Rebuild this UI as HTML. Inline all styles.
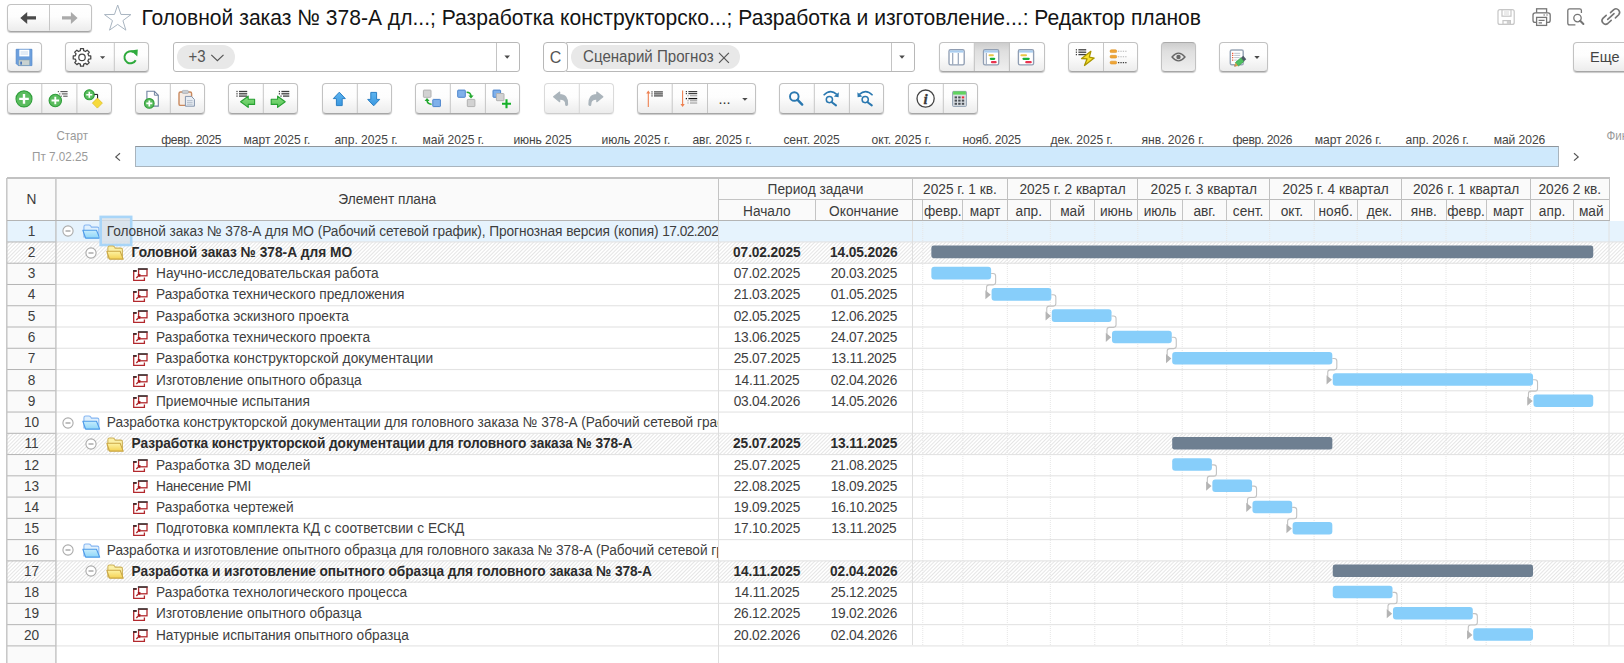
<!DOCTYPE html><html lang="ru"><head><meta charset="utf-8"><title>Редактор планов</title><style>
*{box-sizing:border-box}
html,body{margin:0;padding:0}
body{width:1624px;height:663px;overflow:hidden;position:relative;background:#fff;font-family:"Liberation Sans",sans-serif;color:#3e3e3e;font-size:13.7px}
.a{position:absolute}
.btn{position:absolute;border:1px solid #c2c2c2;border-bottom-color:#a6a6a6;border-radius:4px;background:linear-gradient(#fff 0%,#fdfdfd 45%,#ececec 100%);box-shadow:0 1px 1px rgba(0,0,0,.22)}
.btn i{position:absolute;top:0;bottom:0;width:1px;background:#c9c9c9}
.btn svg{position:absolute}
.pressed{background:linear-gradient(#cdcdcd,#dfdfdf 30%,#efefef);border-top-color:#aaa}
.dis{border-color:#dadada;border-bottom-color:#cdcdcd;box-shadow:0 1px 1px rgba(0,0,0,.08)}
.dis i{background:#dcdcdc}
.inp{position:absolute;border:1px solid #b8b8b8;border-radius:3px;background:#fff}
.tag{position:absolute;background:#e8e8e8;border-radius:12px;color:#555;white-space:nowrap}
.hl{position:absolute;height:1px;background:#e4e4e4}
.vl{position:absolute;width:1px;background:#c4c4c4}
.t{position:absolute;white-space:nowrap;line-height:21.26px;height:21.26px;transform:translateY(-0.3px) scaleY(1.07)}
.sy{display:inline-block;transform:scaleY(1.05)}
.hd{position:absolute;white-space:nowrap;text-align:center;color:#3c3c3c;transform:scaleY(1.05)}
.hatch{position:absolute;background:repeating-linear-gradient(135deg,#fff 0,#fff 0.5px,#e5e5e5 1.5px,#fff 2.5px,#fff 2.65px)}
.bar{position:absolute;height:12.9px;border-radius:3px;background:#87cefa}
.sbar{position:absolute;height:12.9px;border-radius:2.5px;background:#6e7f91}
.ml{position:absolute;top:133px;font-size:12.1px;color:#444;white-space:nowrap;line-height:14px;transform:scaleY(1.05)}
</style></head><body>
<div class="btn" style="left:6.5px;top:4px;width:85px;height:27.5px"></div>

<div class="a" style="left:141.5px;top:5px;font-size:21.08px;line-height:26px;color:#141414;white-space:nowrap;transform:scaleY(1.05);transform-origin:0 19.6px">Головной заказ № 378-А дл...; Разработка конструкторско...; Разработка и изготовление...: Редактор планов</div>

<div class="btn " style="left:6.5px;top:42px;width:35px;height:30px"></div>
<div class="btn " style="left:65px;top:42px;width:83.5px;height:30px"></div>
<div class="inp" style="left:173.4px;top:42px;width:346.6px;height:30px"><i class="a" style="left:321.6px;top:0;bottom:0;width:1px;background:#c4c4c4"></i></div>
<div class="tag" style="left:176.6px;top:45.3px;width:58.4px;height:24px;font-size:15px;line-height:24px;padding-left:12px"><span class="sy">+3</span></div>
<div class="inp" style="left:566px;top:42px;width:348.8px;height:30px;border-radius:0 3px 3px 0"><i class="a" style="left:323.5px;top:0;bottom:0;width:1px;background:#c4c4c4"></i></div>
<div class="btn" style="left:543px;top:42px;width:25px;height:30px;box-shadow:none;border-color:#b8b8b8;background:#fff;font-size:16px;line-height:29px;text-align:center;color:#555"><span class="sy">С</span></div>
<div class="tag" style="left:571px;top:45.3px;width:169px;height:24px;font-size:15.1px;line-height:24px;padding-left:12px"><span class="sy">Сценарий Прогноз</span></div>
<div class="btn " style="left:939px;top:42px;width:105.5px;height:30px"><b class="a" style="left:34.6px;top:0;width:34.8px;height:28px;background:linear-gradient(#cdcdcd,#dfdfdf 30%,#efefef)"></b></div>
<div class="btn " style="left:1068px;top:42px;width:70px;height:30px"></div>
<div class="btn pressed" style="left:1161px;top:42px;width:35px;height:30px"></div>
<div class="btn " style="left:1219px;top:42px;width:48.5px;height:30px"></div>
<div class="btn" style="left:1573px;top:42px;width:60px;height:30px;font-size:14.5px;line-height:28px;padding-left:16px;color:#444"><span class="sy">Еще</span></div>
<div class="btn " style="left:6.5px;top:83px;width:105px;height:31px"><span class="a" style="left:0px;top:0;width:34px;height:28px"></span><span class="a" style="left:35px;top:0;width:34px;height:28px"></span><span class="a" style="left:70px;top:0;width:34px;height:28px"></span></div>
<div class="btn " style="left:135px;top:83px;width:70px;height:31px"><span class="a" style="left:0px;top:0;width:34px;height:28px"></span><span class="a" style="left:35px;top:0;width:34px;height:28px"></span></div>
<div class="btn " style="left:228px;top:83px;width:70px;height:31px"><span class="a" style="left:0px;top:0;width:34px;height:28px"></span><span class="a" style="left:35px;top:0;width:34px;height:28px"></span></div>
<div class="btn " style="left:322px;top:83px;width:70px;height:31px"><span class="a" style="left:0px;top:0;width:34px;height:28px"></span><span class="a" style="left:35px;top:0;width:34px;height:28px"></span></div>
<div class="btn " style="left:415px;top:83px;width:105px;height:31px"><span class="a" style="left:0px;top:0;width:34px;height:28px"></span><span class="a" style="left:35px;top:0;width:34px;height:28px"></span><span class="a" style="left:70px;top:0;width:34px;height:28px"></span></div>
<div class="btn dis" style="left:544px;top:83px;width:70px;height:31px"><span class="a" style="left:0px;top:0;width:34px;height:28px"></span><span class="a" style="left:35px;top:0;width:34px;height:28px"></span></div>
<div class="btn " style="left:637px;top:83px;width:119px;height:31px"><span class="a" style="left:0;top:0;width:34px;height:28px"></span><span class="a" style="left:35px;top:0;width:34px;height:28px"></span><span class="a" style="left:80.5px;top:3.6px;font-size:14.5px;color:#333;line-height:22px">...</span></div>
<div class="btn " style="left:779px;top:83px;width:105px;height:31px"><span class="a" style="left:0px;top:0;width:34px;height:28px"></span><span class="a" style="left:35px;top:0;width:34px;height:28px"></span><span class="a" style="left:70px;top:0;width:34px;height:28px"></span></div>
<div class="btn " style="left:908px;top:83px;width:70px;height:31px"><span class="a" style="left:0px;top:0;width:34px;height:28px"></span><span class="a" style="left:35px;top:0;width:34px;height:28px"></span></div>
<svg class="a" style="left:0;top:0" width="1624" height="120" viewBox="0 0 1624 120"><defs><linearGradient id="gB" x1="0" y1="0" x2="0" y2="1"><stop offset="0" stop-color="#5db4f0"/><stop offset="1" stop-color="#3b98e0"/></linearGradient><linearGradient id="gG" x1="0" y1="0" x2="0" y2="1"><stop offset="0" stop-color="#84da7c"/><stop offset="1" stop-color="#5cc85a"/></linearGradient></defs><rect x="41.30" y="84.00" width="1" height="29.00" fill="#c6c6c6"/><rect x="76.40" y="84.00" width="1" height="29.00" fill="#c6c6c6"/><rect x="169.80" y="84.00" width="1" height="29.00" fill="#c6c6c6"/><rect x="262.80" y="84.00" width="1" height="29.00" fill="#c6c6c6"/><rect x="356.80" y="84.00" width="1" height="29.00" fill="#c6c6c6"/><rect x="449.80" y="84.00" width="1" height="29.00" fill="#c6c6c6"/><rect x="484.90" y="84.00" width="1" height="29.00" fill="#c6c6c6"/><rect x="578.80" y="84.00" width="1" height="29.00" fill="#d8d8d8"/><rect x="671.70" y="84.00" width="1" height="29.00" fill="#c6c6c6"/><rect x="707.00" y="84.00" width="1" height="29.00" fill="#c6c6c6"/><rect x="813.80" y="84.00" width="1" height="29.00" fill="#c6c6c6"/><rect x="848.90" y="84.00" width="1" height="29.00" fill="#c6c6c6"/><rect x="942.80" y="84.00" width="1" height="29.00" fill="#c6c6c6"/><rect x="49.00" y="5.00" width="1" height="25.50" fill="#c6c6c6"/><rect x="113.80" y="43.00" width="1" height="28.00" fill="#c6c6c6"/><rect x="973.80" y="43.00" width="1" height="28.00" fill="#bdbdbd"/><rect x="1008.90" y="43.00" width="1" height="28.00" fill="#bdbdbd"/><rect x="1103.00" y="43.00" width="1" height="28.00" fill="#c6c6c6"/><path d="M20.3 17.9 L27.2 12 V16.3 H36 V19.6 H27.2 V23.9 Z" fill="#4a4a4a"/><path d="M77.6 17.9 L70.9 12 V16.3 H62 V19.6 H70.9 V23.9 Z" fill="#aaaaaa"/><polygon points="117.70,5.00 120.93,14.45 130.92,14.60 122.93,20.60 125.87,30.15 117.70,24.40 109.53,30.15 112.47,20.60 104.48,14.60 114.47,14.45" fill="#fff" stroke="#a9b5c1" stroke-width="1"/><g fill="none" stroke="#c6c6c6" stroke-width="1.2"><rect x="1498" y="9.6" width="16.2" height="14.8" rx="2"/><rect x="1502" y="9.6" width="9" height="6.6"/><rect x="1503" y="20.6" width="7.4" height="3.8"/></g><path d="M1504 12 H1509 M1504 14 H1509" stroke="#d2d2d2" stroke-width="0.9"/><rect x="1506.8" y="21" width="3.2" height="3.2" fill="#d0d0d0"/><g fill="#fff" stroke="#757575" stroke-width="1.3"><rect x="1536.6" y="8.8" width="10" height="4.4"/><rect x="1533" y="12.8" width="17.2" height="9.6" rx="2.2"/><rect x="1536.6" y="17.4" width="10" height="8"/></g><path d="M1538.6 20.4 H1544.6 M1538.6 22.8 H1542" stroke="#757575" stroke-width="1.2"/><path d="M1543.4 15 H1545 M1546.2 15 H1547.8" stroke="#757575" stroke-width="1.1"/><path d="M1581.4 13 V10.6 Q1581.4 8.8 1579.6 8.8 H1569.6 Q1567.8 8.8 1567.8 10.6 V23 Q1567.8 24.9 1569.6 24.9 H1575.4" fill="none" stroke="#757575" stroke-width="1.3"/><circle cx="1577.5" cy="18.1" r="3.7" fill="#fff" stroke="#757575" stroke-width="1.3"/><path d="M1580.2 20.8 L1583.4 24" stroke="#757575" stroke-width="2" stroke-linecap="round"/><g fill="none" stroke="#757575" stroke-width="1.6" stroke-linecap="round"><path d="M1610.5 12.6 L1613.8 9.6 A3.6 3.6 0 0 1 1618.7 14.8 L1615.4 17.9"/><path d="M1611.2 20.4 L1607.8 23.5 A3.6 3.6 0 0 1 1602.9 18.3 L1606.2 15.3"/><path d="M1607.7 19.4 L1614 13.6"/></g><path d="M16.2 49.3 H31.9 V65.6 H18.2 L16.2 63.6 Z" fill="#6c9fdd" stroke="#4f86cc" stroke-width="0.8"/><rect x="19.3" y="49.7" width="10" height="6.7" fill="#fff"/><path d="M20.6 52 H28 M20.6 54 H28" stroke="#b9cfe8" stroke-width="0.8"/><rect x="18.9" y="60" width="10.6" height="5.2" fill="#c9d2d1" stroke="#8fa5a8" stroke-width="0.5"/><rect x="20.4" y="61.6" width="1.4" height="3" fill="#2d62b5"/><path d="M88.70 55.76 L90.77 55.89 L90.77 58.91 L88.70 59.04 L87.90 60.98 L89.27 62.54 L87.14 64.67 L85.58 63.30 L83.64 64.10 L83.51 66.17 L80.49 66.17 L80.36 64.10 L78.42 63.30 L76.86 64.67 L74.73 62.54 L76.10 60.98 L75.30 59.04 L73.23 58.91 L73.23 55.89 L75.30 55.76 L76.10 53.82 L74.73 52.26 L76.86 50.13 L78.42 51.50 L80.36 50.70 L80.49 48.63 L83.51 48.63 L83.64 50.70 L85.58 51.50 L87.14 50.13 L89.27 52.26 L87.90 53.82 Z" fill="#fff" stroke="#444" stroke-width="1.25" stroke-linejoin="round"/><circle cx="82.0" cy="57.4" r="3.2" fill="#fff" stroke="#444" stroke-width="1.25"/><path d="M100.00 56.20 H105.20 L102.60 59.00 Z" fill="#4a4a4a"/><path d="M135.7 60.2 A6 6 0 1 1 133.6 52.2" fill="none" stroke="#2eaa3c" stroke-width="2"/><path d="M130.8 50.6 L137.8 49.6 L137.3 56.6 Z" fill="#2eaa3c"/><path d="M504.40 55.50 H510.00 L507.20 58.70 Z" fill="#4a4a4a"/><path d="M899.20 55.50 H904.80 L902.00 58.70 Z" fill="#4a4a4a"/><path d="M211.3 54.9 L217.4 60.6 L223.5 54.9" fill="none" stroke="#555" stroke-width="1.2"/><path d="M719 52.9 L728.9 62.8 M728.9 52.9 L719 62.8" fill="none" stroke="#555" stroke-width="1.2"/><rect x="949.0" y="49.7" width="15.2" height="15.2" rx="1.6" fill="#fff" stroke="#909eb3" stroke-width="1.35"/><rect x="949.6999999999999" y="50.4" width="13.8" height="2.2" fill="#a9cdf0"/><path d="M952.6999999999999 53.1 V64.5 M958.3 53.1 V64.5" stroke="#97a5ba" stroke-width="1.2"/><rect x="983.5" y="49.7" width="15.2" height="15.2" rx="1.6" fill="#fff" stroke="#909eb3" stroke-width="1.35"/><rect x="984.1999999999999" y="50.4" width="13.8" height="2.2" fill="#a9cdf0"/><path d="M986.3 53.1 V64.5" stroke="#97a5ba" stroke-width="1.1"/><rect x="988.5" y="54.300000000000004" width="5.4" height="2" rx="1" fill="#e8c548"/><rect x="989.6999999999999" y="57.7" width="5.6" height="2.2" rx="1.1" fill="#17b03c"/><rect x="990.9" y="61.1" width="5.8" height="2.2" rx="1.1" fill="#e8334f"/><rect x="1018.4" y="49.7" width="15.2" height="15.2" rx="1.6" fill="#fff" stroke="#909eb3" stroke-width="1.35"/><rect x="1019.0999999999999" y="50.4" width="13.8" height="2.2" fill="#a9cdf0"/><rect x="1020.4" y="54.300000000000004" width="6.6" height="2" rx="1" fill="#e8c548"/><rect x="1022.4" y="57.7" width="7.4" height="2.2" rx="1.1" fill="#17b03c"/><rect x="1025.2" y="61.1" width="6.6" height="2.2" rx="1.1" fill="#e8334f"/><rect x="1075.80" y="49.15" width="1.2" height="1.3" fill="#3f3f3f"/><rect x="1078.40" y="49.15" width="7.80" height="1.3" fill="#3f3f3f"/><rect x="1075.80" y="51.55" width="1.2" height="1.3" fill="#3f3f3f"/><rect x="1078.40" y="51.55" width="7.80" height="1.3" fill="#3f3f3f"/><rect x="1075.80" y="53.95" width="1.2" height="1.3" fill="#3f3f3f"/><rect x="1078.40" y="53.95" width="7.80" height="1.3" fill="#3f3f3f"/><path d="M1090.85 51.3 L1081.6 58.5 L1087 58.95 L1084.5 65.5 L1094.2 58.05 L1089.3 57.15 Z" fill="#f8e12d" stroke="#a99500" stroke-width="1.3" stroke-linejoin="round"/><rect x="1110.1" y="49.800000000000004" width="6.6" height="2.8" rx="1.2" fill="#f0a536" stroke="#dc9328" stroke-width="0.6"/><path d="M1118 51.2 H1127" stroke="#b4b4b4" stroke-width="1.1" stroke-dasharray="1.3 1.1"/><rect x="1110.1" y="55.300000000000004" width="6.6" height="2.8" rx="1.2" fill="#f0a536" stroke="#dc9328" stroke-width="0.6"/><path d="M1118 56.7 H1127" stroke="#b4b4b4" stroke-width="1.1" stroke-dasharray="1.3 1.1"/><rect x="1110.1" y="61.2" width="6.6" height="2.8" rx="1.2" fill="#f0a536" stroke="#dc9328" stroke-width="0.6"/><path d="M1118 62.6 H1127" stroke="#3c3c3c" stroke-width="1.1" stroke-dasharray="1.3 1.1"/><path d="M1172 57 Q1178.5 49.4 1185 57 Q1178.5 64.6 1172 57 Z" fill="none" stroke="#666" stroke-width="1.3"/><circle cx="1178.5" cy="57" r="2.2" fill="#666"/><rect x="1230.3" y="49.9" width="12.9" height="14.9" rx="1.5" fill="#fff" stroke="#9aa8b8" stroke-width="1.5"/><path d="M1234.2 53.3 H1240.2 M1234.2 55.4 H1240.2 M1234.2 57.6 H1239.6 M1234.2 60.1 H1237.4" stroke="#b4bcc6" stroke-width="0.9"/><path d="M1232.1 53.3 h1.2 M1232.1 55.4 h1.2 M1232.1 57.6 h1.2 M1232.1 60.1 h1.2" stroke="#e8502a" stroke-width="1.2"/><path d="M1238.33 66.08 L1235.35 62.58 L1240.99 57.79 L1243.97 61.29 Z" fill="#4fc060" stroke="#2e9b40" stroke-width="0.7" stroke-linejoin="round"/><path d="M1240.99 57.79 L1243.27 55.85 L1246.25 59.35 L1243.97 61.29 Z" fill="#4e5a66"/><path d="M1234.4 66.4 L1238.33 66.08 L1235.35 62.58 Z" fill="#d9a050"/><path d="M1234.4 66.4 L1235.8 66.3 L1234.75 65.05 Z" fill="#6b5030"/><path d="M1254.30 56.00 H1259.70 L1257.00 59.00 Z" fill="#4a4a4a"/><circle cx="24" cy="98.9" r="8" fill="#5bbd5f" stroke="#2f9e3a" stroke-width="1.1"/><path d="M19.2 98.9 H28.8 M24 94.10000000000001 V103.7" stroke="#fff" stroke-width="2.4" fill="none"/><circle cx="55.3" cy="100.5" r="6.2" fill="#5bbd5f" stroke="#2f9e3a" stroke-width="1.1"/><path d="M51.5 100.5 H59.099999999999994 M55.3 96.7 V104.3" stroke="#fff" stroke-width="1.9" fill="none"/><rect x="57.80" y="91.05" width="1.2" height="1.1" fill="#555"/><rect x="60.40" y="91.05" width="7.20" height="1.1" fill="#555"/><rect x="59.20" y="93.35" width="1.2" height="1.1" fill="#555"/><rect x="61.80" y="93.35" width="5.80" height="1.1" fill="#555"/><rect x="60.60" y="95.65" width="1.2" height="1.1" fill="#555"/><rect x="63.20" y="95.65" width="4.40" height="1.1" fill="#555"/><circle cx="89.3" cy="94.8" r="5" fill="#5bbd5f" stroke="#2f9e3a" stroke-width="1.1"/><path d="M86.3 94.8 H92.3 M89.3 91.8 V97.8" stroke="#fff" stroke-width="1.6" fill="none"/><path d="M94.4 94.4 H97.6 V99" fill="none" stroke="#111" stroke-width="1"/><path d="M97.4 98.1 L102.4 103.1 L97.4 108.1 L92.4 103.1 Z" fill="#f6da3c" stroke="#d9b91c" stroke-width="0.7"/><path d="M146.9 91.3 H154.4 L158.3 95.2 V106.1 H146.9 Z" fill="#fff" stroke="#6f83a0" stroke-width="1.1"/><path d="M154.4 91.3 V95.2 H158.3" fill="none" stroke="#6f83a0" stroke-width="1"/><circle cx="149.3" cy="103.4" r="4.8" fill="#5bbd5f" stroke="#2f9e3a" stroke-width="1.1"/><path d="M146.3 103.4 H152.3 M149.3 100.4 V106.4" stroke="#fff" stroke-width="1.7" fill="none"/><rect x="179" y="92" width="12.6" height="13.4" rx="1.5" fill="#f6ede6" stroke="#c9895e" stroke-width="1.4"/><rect x="182.2" y="90.4" width="6.2" height="3" rx="1" fill="#c9cdd2" stroke="#9aa0a8" stroke-width="0.6"/><path d="M185.4 96.4 H191.4 L194.4 99.4 V106.2 H185.4 Z" fill="#e9eef4" stroke="#8394ad" stroke-width="1"/><path d="M187 100.6 H192.6 M187 102.4 H192.6 M187 104.2 H192.6" stroke="#aab5c4" stroke-width="0.8"/><rect x="236.40" y="90.85" width="1.2" height="1.3" fill="#3f3f3f"/><rect x="239.00" y="90.85" width="8.20" height="1.3" fill="#3f3f3f"/><rect x="236.40" y="93.15" width="1.2" height="1.3" fill="#3f3f3f"/><rect x="239.00" y="93.15" width="8.20" height="1.3" fill="#3f3f3f"/><rect x="236.40" y="95.45" width="1.2" height="1.3" fill="#3f3f3f"/><rect x="239.00" y="95.45" width="8.20" height="1.3" fill="#3f3f3f"/><path d="M240.6 101.8 L248.2 96.2 V99.2 H254.6 V104.4 H248.2 V107.4 Z" fill="url(#gG)" stroke="#27a032" stroke-width="1.1" stroke-linejoin="round"/><rect x="278.80" y="90.85" width="1.2" height="1.3" fill="#3f3f3f"/><rect x="281.40" y="90.85" width="7.90" height="1.3" fill="#3f3f3f"/><rect x="278.80" y="93.15" width="1.2" height="1.3" fill="#3f3f3f"/><rect x="281.40" y="93.15" width="7.90" height="1.3" fill="#3f3f3f"/><rect x="280.40" y="95.45" width="1.2" height="1.3" fill="#3f3f3f"/><rect x="283.00" y="95.45" width="6.30" height="1.3" fill="#3f3f3f"/><path d="M285.2 101.8 L277.6 96.2 V99.2 H271.2 V104.4 H277.6 V107.4 Z" fill="url(#gG)" stroke="#27a032" stroke-width="1.1" stroke-linejoin="round"/><path d="M339.3 92.2 L345.3 98.6 H342.2 V105.6 H336.4 V98.6 H333.3 Z" fill="url(#gB)" stroke="#2a7fc4" stroke-width="1" stroke-linejoin="round"/><path d="M373.7 105.8 L379.7 99.4 H376.6 V92.4 H370.8 V99.4 H367.7 Z" fill="url(#gB)" stroke="#2a7fc4" stroke-width="1" stroke-linejoin="round"/><rect x="423.4" y="90.1" width="7.6" height="7.2" rx="0.6" fill="#d2d2d2" stroke="#b2b2b2" stroke-width="1"/><rect x="432.8" y="99.4" width="7.6" height="7.2" rx="0.6" fill="#7fb0ea" stroke="#4c84cc" stroke-width="1"/><path d="M431.6 104.2 Q427.2 104 427 100.2" fill="none" stroke="#22a82e" stroke-width="1.6"/><path d="M424.6 101 L427 98 L429.6 101 Z" fill="#22a82e"/><rect x="457.7" y="90.1" width="7.6" height="7.2" rx="0.6" fill="#7fb0ea" stroke="#4c84cc" stroke-width="1"/><rect x="467.3" y="99.4" width="7.6" height="7.2" rx="0.6" fill="#d2d2d2" stroke="#b2b2b2" stroke-width="1"/><path d="M466.6 92.2 Q470.8 92.4 471 96" fill="none" stroke="#22a82e" stroke-width="1.6"/><path d="M468.4 95.4 L471 98.4 L473.6 95.4 Z" fill="#22a82e"/><rect x="493" y="90.1" width="7.6" height="7.2" rx="0.6" fill="#7fb0ea" stroke="#4c84cc" stroke-width="1"/><rect x="496.4" y="93.5" width="7.6" height="7.2" rx="0.6" fill="#d2d2d2" stroke="#b2b2b2" stroke-width="1"/><path d="M502 103.7 H511 M506.5 99.2 V108.2" stroke="#16b02a" stroke-width="2.1"/><path d="M553.6 96.8 L559.7 92 V94.6 Q568.1 94.7 567.6 104.4 Q567.5 105.4 566.6 105.4 Q565.7 105.4 565.7 104.4 Q565.9 99.1 559.7 98.9 V101.7 Z" fill="#aab4bb" stroke="#aab4bb" stroke-width="1.1" stroke-linejoin="round"/><path d="M602.9 96.8 L596.8 92 V94.6 Q588.4 94.7 588.9 104.4 Q589 105.4 589.9 105.4 Q590.8 105.4 590.8 104.4 Q590.6 99.1 596.8 98.9 V101.7 Z" fill="#aab4bb" stroke="#aab4bb" stroke-width="1.1" stroke-linejoin="round"/><path d="M648.3 92 V106.9" stroke="#ee8050" stroke-width="1.1"/><path d="M646.2 93.4 L648.3 90.4 L650.4 93.4 Z" fill="#ee8050"/><rect x="651.40" y="91.30" width="1.2" height="1.2" fill="#3f3f3f"/><rect x="654.00" y="91.30" width="8.90" height="1.2" fill="#3f3f3f"/><rect x="651.40" y="93.30" width="1.2" height="1.2" fill="#3f3f3f"/><rect x="654.00" y="93.30" width="8.90" height="1.2" fill="#3f3f3f"/><rect x="651.40" y="95.30" width="1.2" height="1.2" fill="#3f3f3f"/><rect x="654.00" y="95.30" width="8.90" height="1.2" fill="#3f3f3f"/><path d="M682.6 90.6 V105.4" stroke="#ee8050" stroke-width="1.1"/><path d="M680.5 104 L682.6 107 L684.7 104 Z" fill="#ee8050"/><rect x="685.80" y="91.00" width="1.2" height="1.2" fill="#3f3f3f"/><rect x="688.40" y="91.00" width="8.80" height="1.2" fill="#3f3f3f"/><rect x="685.80" y="93.00" width="1.2" height="1.2" fill="#3f3f3f"/><rect x="688.40" y="93.00" width="8.80" height="1.2" fill="#3f3f3f"/><rect x="687.40" y="95.35" width="1.2" height="0.9" fill="#888"/><rect x="690.00" y="95.35" width="7.20" height="0.9" fill="#888"/><rect x="685.80" y="97.95" width="1.2" height="1.3" fill="#111"/><rect x="688.40" y="97.95" width="8.80" height="1.3" fill="#111"/><rect x="687.40" y="100.35" width="1.2" height="0.9" fill="#888"/><rect x="690.00" y="100.35" width="7.20" height="0.9" fill="#888"/><rect x="687.40" y="102.55" width="1.2" height="0.9" fill="#888"/><rect x="690.00" y="102.55" width="7.20" height="0.9" fill="#888"/><path d="M742.20 97.90 H747.60 L744.90 100.70 Z" fill="#4a4a4a"/><circle cx="794.3" cy="96.5" r="4.3" fill="none" stroke="#2a78b0" stroke-width="1.9"/><path d="M797.6 99.9 L802.2 104.6" stroke="#2a78b0" stroke-width="2.4" stroke-linecap="round"/><circle cx="829.4" cy="99.6" r="3.1" fill="none" stroke="#2a78b0" stroke-width="1.5"/><path d="M831.8 102.2 L836 105.4" stroke="#2a78b0" stroke-width="2" stroke-linecap="round"/><path d="M823.6 95.2 Q830.4 88.4 836.8 94.4" fill="none" stroke="#2a78b0" stroke-width="1.5"/><path d="M838.8 92.2 L838.6 97.2 L833.8 96.4 Z" fill="#2a78b0"/><circle cx="865.2" cy="99.6" r="3.1" fill="none" stroke="#2a78b0" stroke-width="1.5"/><path d="M867.6 102.2 L871.8 105.4" stroke="#2a78b0" stroke-width="2" stroke-linecap="round"/><path d="M872.6 95.2 Q865.8 88.4 859.4 94.4" fill="none" stroke="#2a78b0" stroke-width="1.5"/><path d="M857.4 92.2 L857.6 97.2 L862.4 96.4 Z" fill="#2a78b0"/><circle cx="925.6" cy="98.6" r="8.6" fill="#fff" stroke="#444" stroke-width="1.3"/><text x="925.6" y="103.7" text-anchor="middle" font-family="Liberation Serif,serif" font-style="italic" font-weight="bold" font-size="15" fill="#3a3a3a" stroke="#3a3a3a" stroke-width="0.35">i</text><rect x="952.6" y="91.4" width="13.8" height="15" rx="0.8" fill="#d9dee3" stroke="#8797aa" stroke-width="0.9"/><rect x="953.1" y="91.4" width="12.8" height="3.2" fill="#5fd35f"/><rect x="954.6" y="96.4" width="2.4" height="2" fill="#4a4f55"/><rect x="958.2" y="96.4" width="2.4" height="2" fill="#4a4f55"/><rect x="961.8" y="96.4" width="2.4" height="2" fill="#f0283c"/><rect x="954.6" y="99.6" width="2.4" height="2" fill="#4a4f55"/><rect x="958.2" y="99.6" width="2.4" height="2" fill="#4a4f55"/><rect x="961.8" y="99.6" width="2.4" height="2" fill="#4a4f55"/><rect x="954.6" y="102.8" width="2.4" height="2" fill="#4a4f55"/><rect x="958.2" y="102.8" width="2.4" height="2" fill="#4a4f55"/><rect x="961.8" y="102.8" width="2.4" height="2" fill="#4a4f55"/></svg>
<div class="a" style="left:30px;top:129px;width:58px;text-align:right;font-size:11.6px;color:#9a9a9a;line-height:14px;transform:scaleY(1.05)">Старт</div>
<div class="a" style="left:20px;top:149.8px;width:68px;text-align:right;font-size:11.7px;color:#9a9a9a;line-height:14px;white-space:nowrap;transform:scaleY(1.05)">Пт 7.02.25</div>
<svg class="a" style="left:113px;top:152px" width="10" height="10" viewBox="0 0 10 10"><path d="M7 1.2 L2.8 4.9 L7 8.6" fill="none" stroke="#555" stroke-width="1.2"/></svg>
<svg class="a" style="left:1570.5px;top:152px" width="10" height="10" viewBox="0 0 10 10"><path d="M3 1.2 L7.2 4.9 L3 8.6" fill="none" stroke="#555" stroke-width="1.2"/></svg>
<div class="a" style="left:1606.5px;top:129px;font-size:11.6px;color:#9a9a9a;line-height:14px;white-space:nowrap;transform:scaleY(1.05)">Финиш</div>
<div class="a" style="left:135px;top:146px;width:1424px;height:21px;background:#cfe9fc;border:1px solid #a9b4bd;border-top-color:#8e959b"></div>
<div class="ml" style="left:161.2px;letter-spacing:-0.35px">февр. 2025</div>
<div class="ml" style="left:243.4px;letter-spacing:0px">март 2025 г.</div>
<div class="ml" style="left:334.4px;letter-spacing:0px">апр. 2025 г.</div>
<div class="ml" style="left:422.4px;letter-spacing:0px">май 2025 г.</div>
<div class="ml" style="left:513.4px;letter-spacing:-0.1px">июнь 2025</div>
<div class="ml" style="left:601.5px;letter-spacing:0px">июль 2025 г.</div>
<div class="ml" style="left:692.4px;letter-spacing:0px">авг. 2025 г.</div>
<div class="ml" style="left:783.4px;letter-spacing:-0.1px">сент. 2025</div>
<div class="ml" style="left:871.5px;letter-spacing:0px">окт. 2025 г.</div>
<div class="ml" style="left:962.5px;letter-spacing:-0.22px">нояб. 2025</div>
<div class="ml" style="left:1050.5px;letter-spacing:0px">дек. 2025 г.</div>
<div class="ml" style="left:1141.5px;letter-spacing:0px">янв. 2026 г.</div>
<div class="ml" style="left:1232.5px;letter-spacing:-0.38px">февр. 2026</div>
<div class="ml" style="left:1314.7px;letter-spacing:0px">март 2026 г.</div>
<div class="ml" style="left:1405.6px;letter-spacing:0px">апр. 2026 г.</div>
<div class="ml" style="left:1493.7px;letter-spacing:-0.06px">май 2026</div>
<div class="a" style="left:7px;top:178px;width:1602px;height:42.25px;background:#fafafa"></div>
<div class="a" style="left:7px;top:220.25px;width:49px;height:442.75px;background:#fafafa"></div>
<div class="a" style="left:7px;top:220.7px;width:1617px;height:21.26px;background:#e6f3fd"></div>
<div class="hatch" style="left:7px;top:242.30999999999997px;width:1617px;height:21.76px"></div>
<div class="hatch" style="left:7px;top:433.65000000000003px;width:1617px;height:21.76px"></div>
<div class="hatch" style="left:7px;top:561.21px;width:1617px;height:21.76px"></div>
<svg class="a" style="left:0;top:220.25px" width="1624" height="444"><line x1="922.75" y1="0" x2="922.75" y2="425.2" stroke="#e6e6e6" stroke-width="1" stroke-dasharray="1 1"/><line x1="962.89" y1="0" x2="962.89" y2="425.2" stroke="#e6e6e6" stroke-width="1" stroke-dasharray="1 1"/><line x1="1007.33" y1="0" x2="1007.33" y2="425.2" stroke="#e6e6e6" stroke-width="1" stroke-dasharray="1 1"/><line x1="1050.34" y1="0" x2="1050.34" y2="425.2" stroke="#e6e6e6" stroke-width="1" stroke-dasharray="1 1"/><line x1="1094.78" y1="0" x2="1094.78" y2="425.2" stroke="#e6e6e6" stroke-width="1" stroke-dasharray="1 1"/><line x1="1137.79" y1="0" x2="1137.79" y2="425.2" stroke="#e6e6e6" stroke-width="1" stroke-dasharray="1 1"/><line x1="1182.23" y1="0" x2="1182.23" y2="425.2" stroke="#e6e6e6" stroke-width="1" stroke-dasharray="1 1"/><line x1="1226.67" y1="0" x2="1226.67" y2="425.2" stroke="#e6e6e6" stroke-width="1" stroke-dasharray="1 1"/><line x1="1269.68" y1="0" x2="1269.68" y2="425.2" stroke="#e6e6e6" stroke-width="1" stroke-dasharray="1 1"/><line x1="1314.12" y1="0" x2="1314.12" y2="425.2" stroke="#e6e6e6" stroke-width="1" stroke-dasharray="1 1"/><line x1="1357.13" y1="0" x2="1357.13" y2="425.2" stroke="#e6e6e6" stroke-width="1" stroke-dasharray="1 1"/><line x1="1401.57" y1="0" x2="1401.57" y2="425.2" stroke="#e6e6e6" stroke-width="1" stroke-dasharray="1 1"/><line x1="1446.01" y1="0" x2="1446.01" y2="425.2" stroke="#e6e6e6" stroke-width="1" stroke-dasharray="1 1"/><line x1="1486.15" y1="0" x2="1486.15" y2="425.2" stroke="#e6e6e6" stroke-width="1" stroke-dasharray="1 1"/><line x1="1530.60" y1="0" x2="1530.60" y2="425.2" stroke="#e6e6e6" stroke-width="1" stroke-dasharray="1 1"/><line x1="1573.60" y1="0" x2="1573.60" y2="425.2" stroke="#e6e6e6" stroke-width="1" stroke-dasharray="1 1"/><line x1="1609" y1="0" x2="1609" y2="425.2" stroke="#e0e0e0" stroke-width="1"/></svg>
<svg class="a" style="left:0;top:0" width="1624" height="663"><rect x="56" y="241.41" width="1568" height="1.1" fill="#e3e3e3"/><rect x="7" y="241.46" width="49" height="1" fill="#b4b4b4"/><rect x="56" y="262.67" width="1568" height="1.1" fill="#e3e3e3"/><rect x="7" y="262.72" width="49" height="1" fill="#b4b4b4"/><rect x="56" y="283.93" width="1568" height="1.1" fill="#e3e3e3"/><rect x="7" y="283.98" width="49" height="1" fill="#b4b4b4"/><rect x="56" y="305.19" width="1568" height="1.1" fill="#e3e3e3"/><rect x="7" y="305.24" width="49" height="1" fill="#b4b4b4"/><rect x="56" y="326.45" width="1568" height="1.1" fill="#e3e3e3"/><rect x="7" y="326.50" width="49" height="1" fill="#b4b4b4"/><rect x="56" y="347.71" width="1568" height="1.1" fill="#e3e3e3"/><rect x="7" y="347.76" width="49" height="1" fill="#b4b4b4"/><rect x="56" y="368.97" width="1568" height="1.1" fill="#e3e3e3"/><rect x="7" y="369.02" width="49" height="1" fill="#b4b4b4"/><rect x="56" y="390.23" width="1568" height="1.1" fill="#e3e3e3"/><rect x="7" y="390.28" width="49" height="1" fill="#b4b4b4"/><rect x="56" y="411.49" width="1568" height="1.1" fill="#e3e3e3"/><rect x="7" y="411.54" width="49" height="1" fill="#b4b4b4"/><rect x="56" y="432.75" width="1568" height="1.1" fill="#e3e3e3"/><rect x="7" y="432.80" width="49" height="1" fill="#b4b4b4"/><rect x="56" y="454.01" width="1568" height="1.1" fill="#e3e3e3"/><rect x="7" y="454.06" width="49" height="1" fill="#b4b4b4"/><rect x="56" y="475.27" width="1568" height="1.1" fill="#e3e3e3"/><rect x="7" y="475.32" width="49" height="1" fill="#b4b4b4"/><rect x="56" y="496.53" width="1568" height="1.1" fill="#e3e3e3"/><rect x="7" y="496.58" width="49" height="1" fill="#b4b4b4"/><rect x="56" y="517.79" width="1568" height="1.1" fill="#e3e3e3"/><rect x="7" y="517.84" width="49" height="1" fill="#b4b4b4"/><rect x="56" y="539.05" width="1568" height="1.1" fill="#e3e3e3"/><rect x="7" y="539.10" width="49" height="1" fill="#b4b4b4"/><rect x="56" y="560.31" width="1568" height="1.1" fill="#e3e3e3"/><rect x="7" y="560.36" width="49" height="1" fill="#b4b4b4"/><rect x="56" y="581.57" width="1568" height="1.1" fill="#e3e3e3"/><rect x="7" y="581.62" width="49" height="1" fill="#b4b4b4"/><rect x="56" y="602.83" width="1568" height="1.1" fill="#e3e3e3"/><rect x="7" y="602.88" width="49" height="1" fill="#b4b4b4"/><rect x="56" y="624.09" width="1568" height="1.1" fill="#e3e3e3"/><rect x="7" y="624.14" width="49" height="1" fill="#b4b4b4"/><rect x="56" y="645.35" width="1568" height="1.1" fill="#e3e3e3"/><rect x="7" y="645.40" width="49" height="1" fill="#b4b4b4"/></svg>
<svg class="a" style="left:0;top:0" width="60" height="663"><rect x="6.1" y="178" width="1.4" height="485" fill="#c2c2c2"/><rect x="55.2" y="178" width="1.4" height="485" fill="#c2c2c2"/></svg>
<div class="vl" style="left:718.0px;top:178px;height:42.25px"></div>
<div class="vl" style="left:718.0px;top:220.25px;height:442.75px;background:#dedede"></div>
<div class="vl" style="left:912.0px;top:178px;height:42.25px"></div>
<div class="vl" style="left:912.0px;top:220.25px;height:425.20000000000005px;background:#dedede"></div>
<div class="vl" style="left:814.75px;top:199.6px;height:20.650000000000006px"></div>
<div class="a" style="left:6.5px;top:177.3px;width:1603px;height:1.6px;background:#c2c2c2"></div>
<div class="a" style="left:7px;top:219.65px;width:1602.5px;height:1.2px;background:#b4b4b4"></div>
<div class="a" style="left:718.5px;top:199.1px;width:890.5px;height:1px;background:#c4c4c4"></div>
<div class="a" style="left:912.5px;top:198.6px;width:696.5px;height:1.6px;background:#bcbcbc"></div>
<div class="vl" style="left:1608.5px;top:178px;height:42.25px"></div>
<div class="hd" style="left:7.00px;top:179.20px;width:49.00px;height:42.25px;line-height:42.25px">N</div>
<div class="hd" style="left:56.00px;top:179.20px;width:662.50px;height:42.25px;line-height:42.25px">Элемент плана</div>
<div class="hd" style="left:718.50px;top:178.80px;width:194.00px;height:21.60px;line-height:21.60px">Период задачи</div>
<div class="hd" style="left:718.50px;top:201.60px;width:96.75px;height:20.65px;line-height:20.65px">Начало</div>
<div class="hd" style="left:815.25px;top:201.60px;width:97.25px;height:20.65px;line-height:20.65px">Окончание</div>
<div class="hd" style="left:912.50px;top:178.80px;width:94.83px;height:21.60px;line-height:21.60px">2025 г. 1 кв.</div>
<div class="hd" style="left:1007.33px;top:178.80px;width:130.46px;height:21.60px;line-height:21.60px">2025 г. 2 квартал</div>
<div class="vl" style="left:1006.63px;top:178px;height:42.25px;width:1.4px;background:#c0c0c0"></div>
<div class="hd" style="left:1137.79px;top:178.80px;width:131.89px;height:21.60px;line-height:21.60px">2025 г. 3 квартал</div>
<div class="vl" style="left:1137.09px;top:178px;height:42.25px;width:1.4px;background:#c0c0c0"></div>
<div class="hd" style="left:1269.68px;top:178.80px;width:131.89px;height:21.60px;line-height:21.60px">2025 г. 4 квартал</div>
<div class="vl" style="left:1268.98px;top:178px;height:42.25px;width:1.4px;background:#c0c0c0"></div>
<div class="hd" style="left:1401.57px;top:178.80px;width:129.02px;height:21.60px;line-height:21.60px">2026 г. 1 квартал</div>
<div class="vl" style="left:1400.87px;top:178px;height:42.25px;width:1.4px;background:#c0c0c0"></div>
<div class="hd" style="left:1530.60px;top:178.80px;width:78.40px;height:21.60px;line-height:21.60px">2026 2 кв.</div>
<div class="vl" style="left:1529.90px;top:178px;height:42.25px;width:1.4px;background:#c0c0c0"></div>
<div class="hd" style="left:922.75px;top:201.60px;width:40.14px;height:20.65px;line-height:20.65px">февр.</div>
<div class="vl" style="left:922.25px;top:199.6px;height:20.650000000000006px"></div>
<div class="hd" style="left:962.89px;top:201.60px;width:44.44px;height:20.65px;line-height:20.65px">март</div>
<div class="vl" style="left:962.39px;top:199.6px;height:20.650000000000006px"></div>
<div class="hd" style="left:1007.33px;top:201.60px;width:43.01px;height:20.65px;line-height:20.65px">апр.</div>
<div class="hd" style="left:1050.34px;top:201.60px;width:44.44px;height:20.65px;line-height:20.65px">май</div>
<div class="vl" style="left:1049.84px;top:199.6px;height:20.650000000000006px"></div>
<div class="hd" style="left:1094.78px;top:201.60px;width:43.01px;height:20.65px;line-height:20.65px">июнь</div>
<div class="vl" style="left:1094.28px;top:199.6px;height:20.650000000000006px"></div>
<div class="hd" style="left:1137.79px;top:201.60px;width:44.44px;height:20.65px;line-height:20.65px">июль</div>
<div class="hd" style="left:1182.23px;top:201.60px;width:44.44px;height:20.65px;line-height:20.65px">авг.</div>
<div class="vl" style="left:1181.73px;top:199.6px;height:20.650000000000006px"></div>
<div class="hd" style="left:1226.67px;top:201.60px;width:43.01px;height:20.65px;line-height:20.65px">сент.</div>
<div class="vl" style="left:1226.17px;top:199.6px;height:20.650000000000006px"></div>
<div class="hd" style="left:1269.68px;top:201.60px;width:44.44px;height:20.65px;line-height:20.65px">окт.</div>
<div class="hd" style="left:1314.12px;top:201.60px;width:43.01px;height:20.65px;line-height:20.65px">нояб.</div>
<div class="vl" style="left:1313.62px;top:199.6px;height:20.650000000000006px"></div>
<div class="hd" style="left:1357.13px;top:201.60px;width:44.44px;height:20.65px;line-height:20.65px">дек.</div>
<div class="vl" style="left:1356.63px;top:199.6px;height:20.650000000000006px"></div>
<div class="hd" style="left:1401.57px;top:201.60px;width:44.44px;height:20.65px;line-height:20.65px">янв.</div>
<div class="hd" style="left:1446.01px;top:201.60px;width:40.14px;height:20.65px;line-height:20.65px">февр.</div>
<div class="vl" style="left:1445.51px;top:199.6px;height:20.650000000000006px"></div>
<div class="hd" style="left:1486.15px;top:201.60px;width:44.44px;height:20.65px;line-height:20.65px">март</div>
<div class="vl" style="left:1485.65px;top:199.6px;height:20.650000000000006px"></div>
<div class="hd" style="left:1530.60px;top:201.60px;width:43.01px;height:20.65px;line-height:20.65px">апр.</div>
<div class="hd" style="left:1573.60px;top:201.60px;width:35.40px;height:20.65px;line-height:20.65px">май</div>
<div class="vl" style="left:1573.10px;top:199.6px;height:20.650000000000006px"></div>
<div class="t" style="left:7px;top:220.70px;width:49px;text-align:center">1</div>
<svg class="a" style="left:60.50px;top:224.33px" width="14" height="14" viewBox="0 0 14 14"><circle cx="7" cy="7" r="5.1" fill="#fff" stroke="#ababab" stroke-width="1.1"/><path d="M4.5 7 H9.5" stroke="#969696" stroke-width="1.2"/></svg>
<svg class="a" style="left:81.80px;top:223.60px" width="19.2" height="15.6" viewBox="0 0 18 15" preserveAspectRatio="none"><defs><linearGradient id="fb1" x1="0" y1="0" x2="0" y2="1"><stop offset="0" stop-color="#c6ecfd"/><stop offset="1" stop-color="#8ed6f8"/></linearGradient></defs><path d="M1.8 12.6 V2.6 Q1.8 1 3.4 1 H6.4 Q7.6 1 8.2 2 L8.8 3 H14.4 Q15.8 3 15.8 4.4 V12.6 Z" fill="#dff0fd" stroke="#86b6f2" stroke-width="1"/><path d="M0.8 6 H13.6 L16.6 13.6 H3.4 Z" fill="url(#fb1)" stroke="#4c9ae8" stroke-width="1" stroke-linejoin="round"/></svg>
<svg class="a" style="left:95px;top:212px" width="42" height="38" viewBox="95 212 42 38"><rect x="100.7" y="216.9" width="30.5" height="28.1" fill="rgba(214,223,232,.78)" stroke="#a8d5f8" stroke-width="2.6"/></svg>
<div class="t" style="left:106.8px;top:220.70px;width:611.2px;overflow:hidden;letter-spacing:-0.072px">Головной заказ № 378-А для МО (Рабочий сетевой график), Прогнозная версия (копия) <span style="letter-spacing:-0.55px">17.02.2025</span></div>
<div class="t" style="left:7px;top:241.96px;width:49px;text-align:center">2</div>
<svg class="a" style="left:84.30px;top:245.59px" width="14" height="14" viewBox="0 0 14 14"><circle cx="7" cy="7" r="5.1" fill="#fff" stroke="#ababab" stroke-width="1.1"/><path d="M4.5 7 H9.5" stroke="#969696" stroke-width="1.2"/></svg>
<svg class="a" style="left:105.70px;top:245.46px" width="18.7" height="15.6" viewBox="0 0 18 15" preserveAspectRatio="none"><defs><linearGradient id="fy2" x1="0" y1="0" x2="0" y2="1"><stop offset="0" stop-color="#fdf3a4"/><stop offset="1" stop-color="#f4d152"/></linearGradient></defs><path d="M1.8 12.6 V2.6 Q1.8 1 3.4 1 H6.4 Q7.6 1 8.2 2 L8.8 3 H14.4 Q15.8 3 15.8 4.4 V12.6 Z" fill="#fbf0a6" stroke="#cdb15a" stroke-width="1"/><path d="M0.8 6 H13.6 L16.6 13.6 H3.4 Z" fill="url(#fy2)" stroke="#c9a544" stroke-width="1" stroke-linejoin="round"/></svg>
<div class="t" style="left:131.6px;top:241.96px;font-weight:bold;color:#2b2b2b;letter-spacing:0.018px">Головной заказ № 378-А для МО</div>
<div class="t" style="left:718.5px;top:241.96px;width:96.75px;text-align:center;font-weight:bold;color:#2b2b2b;letter-spacing:-0.1px;">07.02.2025</div>
<div class="t" style="left:815.25px;top:241.96px;width:97.25px;text-align:center;font-weight:bold;color:#2b2b2b;letter-spacing:-0.1px;">14.05.2026</div>
<div class="t" style="left:7px;top:263.22px;width:49px;text-align:center">3</div>
<svg class="a" style="left:133.00px;top:267.52px" width="15" height="13.5" viewBox="0 0 15 13.5"><path d="M3.6 3 H0.7 V12.4 H11.4 V9.4" fill="none" stroke="#b2282d" stroke-width="1.3"/><rect x="5.6" y="1.2" width="8.4" height="6.6" fill="#fff" stroke="#b2282d" stroke-width="1.3"/><rect x="4.9" y="0.2" width="9.8" height="1.5" fill="#3a3a3a"/><rect x="0.1" y="2.2" width="3.6" height="1.4" fill="#222"/><path d="M3.3 10 L5.8 7.6" stroke="#b2282d" stroke-width="1.4"/><path d="M4.4 6.5 L7.5 6.1 L7.1 9.2 Z" fill="#a31016"/></svg>
<div class="t" style="left:156px;top:263.22px;letter-spacing:0.017px">Научно-исследовательская работа</div>
<div class="t" style="left:718.5px;top:263.22px;width:96.75px;text-align:center;letter-spacing:-0.22px;">07.02.2025</div>
<div class="t" style="left:815.25px;top:263.22px;width:97.25px;text-align:center;letter-spacing:-0.22px;">20.03.2025</div>
<div class="t" style="left:7px;top:284.48px;width:49px;text-align:center">4</div>
<svg class="a" style="left:133.00px;top:288.78px" width="15" height="13.5" viewBox="0 0 15 13.5"><path d="M3.6 3 H0.7 V12.4 H11.4 V9.4" fill="none" stroke="#b2282d" stroke-width="1.3"/><rect x="5.6" y="1.2" width="8.4" height="6.6" fill="#fff" stroke="#b2282d" stroke-width="1.3"/><rect x="4.9" y="0.2" width="9.8" height="1.5" fill="#3a3a3a"/><rect x="0.1" y="2.2" width="3.6" height="1.4" fill="#222"/><path d="M3.3 10 L5.8 7.6" stroke="#b2282d" stroke-width="1.4"/><path d="M4.4 6.5 L7.5 6.1 L7.1 9.2 Z" fill="#a31016"/></svg>
<div class="t" style="left:156px;top:284.48px;letter-spacing:-0.015px">Разработка технического предложения</div>
<div class="t" style="left:718.5px;top:284.48px;width:96.75px;text-align:center;letter-spacing:-0.22px;">21.03.2025</div>
<div class="t" style="left:815.25px;top:284.48px;width:97.25px;text-align:center;letter-spacing:-0.22px;">01.05.2025</div>
<div class="t" style="left:7px;top:305.74px;width:49px;text-align:center">5</div>
<svg class="a" style="left:133.00px;top:310.04px" width="15" height="13.5" viewBox="0 0 15 13.5"><path d="M3.6 3 H0.7 V12.4 H11.4 V9.4" fill="none" stroke="#b2282d" stroke-width="1.3"/><rect x="5.6" y="1.2" width="8.4" height="6.6" fill="#fff" stroke="#b2282d" stroke-width="1.3"/><rect x="4.9" y="0.2" width="9.8" height="1.5" fill="#3a3a3a"/><rect x="0.1" y="2.2" width="3.6" height="1.4" fill="#222"/><path d="M3.3 10 L5.8 7.6" stroke="#b2282d" stroke-width="1.4"/><path d="M4.4 6.5 L7.5 6.1 L7.1 9.2 Z" fill="#a31016"/></svg>
<div class="t" style="left:156px;top:305.74px;letter-spacing:0.037px">Разработка эскизного проекта</div>
<div class="t" style="left:718.5px;top:305.74px;width:96.75px;text-align:center;letter-spacing:-0.22px;">02.05.2025</div>
<div class="t" style="left:815.25px;top:305.74px;width:97.25px;text-align:center;letter-spacing:-0.22px;">12.06.2025</div>
<div class="t" style="left:7px;top:327.00px;width:49px;text-align:center">6</div>
<svg class="a" style="left:133.00px;top:331.30px" width="15" height="13.5" viewBox="0 0 15 13.5"><path d="M3.6 3 H0.7 V12.4 H11.4 V9.4" fill="none" stroke="#b2282d" stroke-width="1.3"/><rect x="5.6" y="1.2" width="8.4" height="6.6" fill="#fff" stroke="#b2282d" stroke-width="1.3"/><rect x="4.9" y="0.2" width="9.8" height="1.5" fill="#3a3a3a"/><rect x="0.1" y="2.2" width="3.6" height="1.4" fill="#222"/><path d="M3.3 10 L5.8 7.6" stroke="#b2282d" stroke-width="1.4"/><path d="M4.4 6.5 L7.5 6.1 L7.1 9.2 Z" fill="#a31016"/></svg>
<div class="t" style="left:156px;top:327.00px;letter-spacing:0.008px">Разработка технического проекта</div>
<div class="t" style="left:718.5px;top:327.00px;width:96.75px;text-align:center;letter-spacing:-0.22px;">13.06.2025</div>
<div class="t" style="left:815.25px;top:327.00px;width:97.25px;text-align:center;letter-spacing:-0.22px;">24.07.2025</div>
<div class="t" style="left:7px;top:348.26px;width:49px;text-align:center">7</div>
<svg class="a" style="left:133.00px;top:352.56px" width="15" height="13.5" viewBox="0 0 15 13.5"><path d="M3.6 3 H0.7 V12.4 H11.4 V9.4" fill="none" stroke="#b2282d" stroke-width="1.3"/><rect x="5.6" y="1.2" width="8.4" height="6.6" fill="#fff" stroke="#b2282d" stroke-width="1.3"/><rect x="4.9" y="0.2" width="9.8" height="1.5" fill="#3a3a3a"/><rect x="0.1" y="2.2" width="3.6" height="1.4" fill="#222"/><path d="M3.3 10 L5.8 7.6" stroke="#b2282d" stroke-width="1.4"/><path d="M4.4 6.5 L7.5 6.1 L7.1 9.2 Z" fill="#a31016"/></svg>
<div class="t" style="left:156px;top:348.26px;letter-spacing:0.059px">Разработка конструкторской документации</div>
<div class="t" style="left:718.5px;top:348.26px;width:96.75px;text-align:center;letter-spacing:-0.22px;">25.07.2025</div>
<div class="t" style="left:815.25px;top:348.26px;width:97.25px;text-align:center;letter-spacing:-0.22px;">13.11.2025</div>
<div class="t" style="left:7px;top:369.52px;width:49px;text-align:center">8</div>
<svg class="a" style="left:133.00px;top:373.82px" width="15" height="13.5" viewBox="0 0 15 13.5"><path d="M3.6 3 H0.7 V12.4 H11.4 V9.4" fill="none" stroke="#b2282d" stroke-width="1.3"/><rect x="5.6" y="1.2" width="8.4" height="6.6" fill="#fff" stroke="#b2282d" stroke-width="1.3"/><rect x="4.9" y="0.2" width="9.8" height="1.5" fill="#3a3a3a"/><rect x="0.1" y="2.2" width="3.6" height="1.4" fill="#222"/><path d="M3.3 10 L5.8 7.6" stroke="#b2282d" stroke-width="1.4"/><path d="M4.4 6.5 L7.5 6.1 L7.1 9.2 Z" fill="#a31016"/></svg>
<div class="t" style="left:156px;top:369.52px;letter-spacing:0.000px">Изготовление опытного образца</div>
<div class="t" style="left:718.5px;top:369.52px;width:96.75px;text-align:center;letter-spacing:-0.22px;">14.11.2025</div>
<div class="t" style="left:815.25px;top:369.52px;width:97.25px;text-align:center;letter-spacing:-0.22px;">02.04.2026</div>
<div class="t" style="left:7px;top:390.78px;width:49px;text-align:center">9</div>
<svg class="a" style="left:133.00px;top:395.08px" width="15" height="13.5" viewBox="0 0 15 13.5"><path d="M3.6 3 H0.7 V12.4 H11.4 V9.4" fill="none" stroke="#b2282d" stroke-width="1.3"/><rect x="5.6" y="1.2" width="8.4" height="6.6" fill="#fff" stroke="#b2282d" stroke-width="1.3"/><rect x="4.9" y="0.2" width="9.8" height="1.5" fill="#3a3a3a"/><rect x="0.1" y="2.2" width="3.6" height="1.4" fill="#222"/><path d="M3.3 10 L5.8 7.6" stroke="#b2282d" stroke-width="1.4"/><path d="M4.4 6.5 L7.5 6.1 L7.1 9.2 Z" fill="#a31016"/></svg>
<div class="t" style="left:156px;top:390.78px;letter-spacing:0.026px">Приемочные испытания</div>
<div class="t" style="left:718.5px;top:390.78px;width:96.75px;text-align:center;letter-spacing:-0.22px;">03.04.2026</div>
<div class="t" style="left:815.25px;top:390.78px;width:97.25px;text-align:center;letter-spacing:-0.22px;">14.05.2026</div>
<div class="t" style="left:7px;top:412.04px;width:49px;text-align:center">10</div>
<svg class="a" style="left:60.50px;top:415.67px" width="14" height="14" viewBox="0 0 14 14"><circle cx="7" cy="7" r="5.1" fill="#fff" stroke="#ababab" stroke-width="1.1"/><path d="M4.5 7 H9.5" stroke="#969696" stroke-width="1.2"/></svg>
<svg class="a" style="left:81.80px;top:414.94px" width="19.2" height="15.6" viewBox="0 0 18 15" preserveAspectRatio="none"><defs><linearGradient id="fb3" x1="0" y1="0" x2="0" y2="1"><stop offset="0" stop-color="#c6ecfd"/><stop offset="1" stop-color="#8ed6f8"/></linearGradient></defs><path d="M1.8 12.6 V2.6 Q1.8 1 3.4 1 H6.4 Q7.6 1 8.2 2 L8.8 3 H14.4 Q15.8 3 15.8 4.4 V12.6 Z" fill="#dff0fd" stroke="#86b6f2" stroke-width="1"/><path d="M0.8 6 H13.6 L16.6 13.6 H3.4 Z" fill="url(#fb3)" stroke="#4c9ae8" stroke-width="1" stroke-linejoin="round"/></svg>
<div class="t" style="left:106.8px;top:412.04px;width:611.2px;overflow:hidden;letter-spacing:-0.026px">Разработка конструкторской документации для головного заказа № 378-А (Рабочий сетевой график)</div>
<div class="t" style="left:7px;top:433.30px;width:49px;text-align:center">11</div>
<svg class="a" style="left:84.30px;top:436.93px" width="14" height="14" viewBox="0 0 14 14"><circle cx="7" cy="7" r="5.1" fill="#fff" stroke="#ababab" stroke-width="1.1"/><path d="M4.5 7 H9.5" stroke="#969696" stroke-width="1.2"/></svg>
<svg class="a" style="left:105.70px;top:436.80px" width="18.7" height="15.6" viewBox="0 0 18 15" preserveAspectRatio="none"><defs><linearGradient id="fy4" x1="0" y1="0" x2="0" y2="1"><stop offset="0" stop-color="#fdf3a4"/><stop offset="1" stop-color="#f4d152"/></linearGradient></defs><path d="M1.8 12.6 V2.6 Q1.8 1 3.4 1 H6.4 Q7.6 1 8.2 2 L8.8 3 H14.4 Q15.8 3 15.8 4.4 V12.6 Z" fill="#fbf0a6" stroke="#cdb15a" stroke-width="1"/><path d="M0.8 6 H13.6 L16.6 13.6 H3.4 Z" fill="url(#fy4)" stroke="#c9a544" stroke-width="1" stroke-linejoin="round"/></svg>
<div class="t" style="left:131.6px;top:433.30px;font-weight:bold;color:#2b2b2b;letter-spacing:-0.071px">Разработка конструкторской документации для головного заказа № 378-А</div>
<div class="t" style="left:718.5px;top:433.30px;width:96.75px;text-align:center;font-weight:bold;color:#2b2b2b;letter-spacing:-0.1px;">25.07.2025</div>
<div class="t" style="left:815.25px;top:433.30px;width:97.25px;text-align:center;font-weight:bold;color:#2b2b2b;letter-spacing:-0.1px;">13.11.2025</div>
<div class="t" style="left:7px;top:454.56px;width:49px;text-align:center">12</div>
<svg class="a" style="left:133.00px;top:458.86px" width="15" height="13.5" viewBox="0 0 15 13.5"><path d="M3.6 3 H0.7 V12.4 H11.4 V9.4" fill="none" stroke="#b2282d" stroke-width="1.3"/><rect x="5.6" y="1.2" width="8.4" height="6.6" fill="#fff" stroke="#b2282d" stroke-width="1.3"/><rect x="4.9" y="0.2" width="9.8" height="1.5" fill="#3a3a3a"/><rect x="0.1" y="2.2" width="3.6" height="1.4" fill="#222"/><path d="M3.3 10 L5.8 7.6" stroke="#b2282d" stroke-width="1.4"/><path d="M4.4 6.5 L7.5 6.1 L7.1 9.2 Z" fill="#a31016"/></svg>
<div class="t" style="left:156px;top:454.56px;letter-spacing:0.062px">Разработка 3D моделей</div>
<div class="t" style="left:718.5px;top:454.56px;width:96.75px;text-align:center;letter-spacing:-0.22px;">25.07.2025</div>
<div class="t" style="left:815.25px;top:454.56px;width:97.25px;text-align:center;letter-spacing:-0.22px;">21.08.2025</div>
<div class="t" style="left:7px;top:475.82px;width:49px;text-align:center">13</div>
<svg class="a" style="left:133.00px;top:480.12px" width="15" height="13.5" viewBox="0 0 15 13.5"><path d="M3.6 3 H0.7 V12.4 H11.4 V9.4" fill="none" stroke="#b2282d" stroke-width="1.3"/><rect x="5.6" y="1.2" width="8.4" height="6.6" fill="#fff" stroke="#b2282d" stroke-width="1.3"/><rect x="4.9" y="0.2" width="9.8" height="1.5" fill="#3a3a3a"/><rect x="0.1" y="2.2" width="3.6" height="1.4" fill="#222"/><path d="M3.3 10 L5.8 7.6" stroke="#b2282d" stroke-width="1.4"/><path d="M4.4 6.5 L7.5 6.1 L7.1 9.2 Z" fill="#a31016"/></svg>
<div class="t" style="left:156px;top:475.82px;letter-spacing:-0.229px">Нанесение PMI</div>
<div class="t" style="left:718.5px;top:475.82px;width:96.75px;text-align:center;letter-spacing:-0.22px;">22.08.2025</div>
<div class="t" style="left:815.25px;top:475.82px;width:97.25px;text-align:center;letter-spacing:-0.22px;">18.09.2025</div>
<div class="t" style="left:7px;top:497.08px;width:49px;text-align:center">14</div>
<svg class="a" style="left:133.00px;top:501.38px" width="15" height="13.5" viewBox="0 0 15 13.5"><path d="M3.6 3 H0.7 V12.4 H11.4 V9.4" fill="none" stroke="#b2282d" stroke-width="1.3"/><rect x="5.6" y="1.2" width="8.4" height="6.6" fill="#fff" stroke="#b2282d" stroke-width="1.3"/><rect x="4.9" y="0.2" width="9.8" height="1.5" fill="#3a3a3a"/><rect x="0.1" y="2.2" width="3.6" height="1.4" fill="#222"/><path d="M3.3 10 L5.8 7.6" stroke="#b2282d" stroke-width="1.4"/><path d="M4.4 6.5 L7.5 6.1 L7.1 9.2 Z" fill="#a31016"/></svg>
<div class="t" style="left:156px;top:497.08px;letter-spacing:0.042px">Разработка чертежей</div>
<div class="t" style="left:718.5px;top:497.08px;width:96.75px;text-align:center;letter-spacing:-0.22px;">19.09.2025</div>
<div class="t" style="left:815.25px;top:497.08px;width:97.25px;text-align:center;letter-spacing:-0.22px;">16.10.2025</div>
<div class="t" style="left:7px;top:518.34px;width:49px;text-align:center">15</div>
<svg class="a" style="left:133.00px;top:522.64px" width="15" height="13.5" viewBox="0 0 15 13.5"><path d="M3.6 3 H0.7 V12.4 H11.4 V9.4" fill="none" stroke="#b2282d" stroke-width="1.3"/><rect x="5.6" y="1.2" width="8.4" height="6.6" fill="#fff" stroke="#b2282d" stroke-width="1.3"/><rect x="4.9" y="0.2" width="9.8" height="1.5" fill="#3a3a3a"/><rect x="0.1" y="2.2" width="3.6" height="1.4" fill="#222"/><path d="M3.3 10 L5.8 7.6" stroke="#b2282d" stroke-width="1.4"/><path d="M4.4 6.5 L7.5 6.1 L7.1 9.2 Z" fill="#a31016"/></svg>
<div class="t" style="left:156px;top:518.34px;letter-spacing:0.052px">Подготовка комплекта КД с соответсвии с ЕСКД</div>
<div class="t" style="left:718.5px;top:518.34px;width:96.75px;text-align:center;letter-spacing:-0.22px;">17.10.2025</div>
<div class="t" style="left:815.25px;top:518.34px;width:97.25px;text-align:center;letter-spacing:-0.22px;">13.11.2025</div>
<div class="t" style="left:7px;top:539.60px;width:49px;text-align:center">16</div>
<svg class="a" style="left:60.50px;top:543.23px" width="14" height="14" viewBox="0 0 14 14"><circle cx="7" cy="7" r="5.1" fill="#fff" stroke="#ababab" stroke-width="1.1"/><path d="M4.5 7 H9.5" stroke="#969696" stroke-width="1.2"/></svg>
<svg class="a" style="left:81.80px;top:542.50px" width="19.2" height="15.6" viewBox="0 0 18 15" preserveAspectRatio="none"><defs><linearGradient id="fb5" x1="0" y1="0" x2="0" y2="1"><stop offset="0" stop-color="#c6ecfd"/><stop offset="1" stop-color="#8ed6f8"/></linearGradient></defs><path d="M1.8 12.6 V2.6 Q1.8 1 3.4 1 H6.4 Q7.6 1 8.2 2 L8.8 3 H14.4 Q15.8 3 15.8 4.4 V12.6 Z" fill="#dff0fd" stroke="#86b6f2" stroke-width="1"/><path d="M0.8 6 H13.6 L16.6 13.6 H3.4 Z" fill="url(#fb5)" stroke="#4c9ae8" stroke-width="1" stroke-linejoin="round"/></svg>
<div class="t" style="left:106.8px;top:539.60px;width:611.2px;overflow:hidden;letter-spacing:-0.054px">Разработка и изготовление опытного образца для головного заказа № 378-А (Рабочий сетевой график)</div>
<div class="t" style="left:7px;top:560.86px;width:49px;text-align:center">17</div>
<svg class="a" style="left:84.30px;top:564.49px" width="14" height="14" viewBox="0 0 14 14"><circle cx="7" cy="7" r="5.1" fill="#fff" stroke="#ababab" stroke-width="1.1"/><path d="M4.5 7 H9.5" stroke="#969696" stroke-width="1.2"/></svg>
<svg class="a" style="left:105.70px;top:564.36px" width="18.7" height="15.6" viewBox="0 0 18 15" preserveAspectRatio="none"><defs><linearGradient id="fy6" x1="0" y1="0" x2="0" y2="1"><stop offset="0" stop-color="#fdf3a4"/><stop offset="1" stop-color="#f4d152"/></linearGradient></defs><path d="M1.8 12.6 V2.6 Q1.8 1 3.4 1 H6.4 Q7.6 1 8.2 2 L8.8 3 H14.4 Q15.8 3 15.8 4.4 V12.6 Z" fill="#fbf0a6" stroke="#cdb15a" stroke-width="1"/><path d="M0.8 6 H13.6 L16.6 13.6 H3.4 Z" fill="url(#fy6)" stroke="#c9a544" stroke-width="1" stroke-linejoin="round"/></svg>
<div class="t" style="left:131.6px;top:560.86px;font-weight:bold;color:#2b2b2b;letter-spacing:-0.050px">Разработка и изготовление опытного образца для головного заказа № 378-А</div>
<div class="t" style="left:718.5px;top:560.86px;width:96.75px;text-align:center;font-weight:bold;color:#2b2b2b;letter-spacing:-0.1px;">14.11.2025</div>
<div class="t" style="left:815.25px;top:560.86px;width:97.25px;text-align:center;font-weight:bold;color:#2b2b2b;letter-spacing:-0.1px;">02.04.2026</div>
<div class="t" style="left:7px;top:582.12px;width:49px;text-align:center">18</div>
<svg class="a" style="left:133.00px;top:586.42px" width="15" height="13.5" viewBox="0 0 15 13.5"><path d="M3.6 3 H0.7 V12.4 H11.4 V9.4" fill="none" stroke="#b2282d" stroke-width="1.3"/><rect x="5.6" y="1.2" width="8.4" height="6.6" fill="#fff" stroke="#b2282d" stroke-width="1.3"/><rect x="4.9" y="0.2" width="9.8" height="1.5" fill="#3a3a3a"/><rect x="0.1" y="2.2" width="3.6" height="1.4" fill="#222"/><path d="M3.3 10 L5.8 7.6" stroke="#b2282d" stroke-width="1.4"/><path d="M4.4 6.5 L7.5 6.1 L7.1 9.2 Z" fill="#a31016"/></svg>
<div class="t" style="left:156px;top:582.12px;letter-spacing:0.007px">Разработка технологического процесса</div>
<div class="t" style="left:718.5px;top:582.12px;width:96.75px;text-align:center;letter-spacing:-0.22px;">14.11.2025</div>
<div class="t" style="left:815.25px;top:582.12px;width:97.25px;text-align:center;letter-spacing:-0.22px;">25.12.2025</div>
<div class="t" style="left:7px;top:603.38px;width:49px;text-align:center">19</div>
<svg class="a" style="left:133.00px;top:607.68px" width="15" height="13.5" viewBox="0 0 15 13.5"><path d="M3.6 3 H0.7 V12.4 H11.4 V9.4" fill="none" stroke="#b2282d" stroke-width="1.3"/><rect x="5.6" y="1.2" width="8.4" height="6.6" fill="#fff" stroke="#b2282d" stroke-width="1.3"/><rect x="4.9" y="0.2" width="9.8" height="1.5" fill="#3a3a3a"/><rect x="0.1" y="2.2" width="3.6" height="1.4" fill="#222"/><path d="M3.3 10 L5.8 7.6" stroke="#b2282d" stroke-width="1.4"/><path d="M4.4 6.5 L7.5 6.1 L7.1 9.2 Z" fill="#a31016"/></svg>
<div class="t" style="left:156px;top:603.38px;letter-spacing:0.000px">Изготовление опытного образца</div>
<div class="t" style="left:718.5px;top:603.38px;width:96.75px;text-align:center;letter-spacing:-0.22px;">26.12.2025</div>
<div class="t" style="left:815.25px;top:603.38px;width:97.25px;text-align:center;letter-spacing:-0.22px;">19.02.2026</div>
<div class="t" style="left:7px;top:624.64px;width:49px;text-align:center">20</div>
<svg class="a" style="left:133.00px;top:628.94px" width="15" height="13.5" viewBox="0 0 15 13.5"><path d="M3.6 3 H0.7 V12.4 H11.4 V9.4" fill="none" stroke="#b2282d" stroke-width="1.3"/><rect x="5.6" y="1.2" width="8.4" height="6.6" fill="#fff" stroke="#b2282d" stroke-width="1.3"/><rect x="4.9" y="0.2" width="9.8" height="1.5" fill="#3a3a3a"/><rect x="0.1" y="2.2" width="3.6" height="1.4" fill="#222"/><path d="M3.3 10 L5.8 7.6" stroke="#b2282d" stroke-width="1.4"/><path d="M4.4 6.5 L7.5 6.1 L7.1 9.2 Z" fill="#a31016"/></svg>
<div class="t" style="left:156px;top:624.64px;letter-spacing:-0.015px">Натурные испытания опытного образца</div>
<div class="t" style="left:718.5px;top:624.64px;width:96.75px;text-align:center;letter-spacing:-0.22px;">20.02.2026</div>
<div class="t" style="left:815.25px;top:624.64px;width:97.25px;text-align:center;letter-spacing:-0.22px;">02.04.2026</div>
<svg class="a" style="left:0;top:0" width="1624" height="663"><rect x="931.35" y="245.59" width="661.89" height="12.6" rx="2.4" fill="#6e7f91"/><rect x="931.35" y="266.85" width="59.78" height="12.6" rx="3" fill="#87cefa"/><rect x="991.56" y="288.11" width="59.78" height="12.6" rx="3" fill="#87cefa"/><rect x="1051.77" y="309.37" width="59.78" height="12.6" rx="3" fill="#87cefa"/><rect x="1111.99" y="330.63" width="59.78" height="12.6" rx="3" fill="#87cefa"/><rect x="1172.20" y="351.89" width="160.13" height="12.6" rx="3" fill="#87cefa"/><rect x="1332.76" y="373.15" width="200.27" height="12.6" rx="3" fill="#87cefa"/><rect x="1533.46" y="394.41" width="59.78" height="12.6" rx="3" fill="#87cefa"/><rect x="1172.20" y="436.93" width="160.13" height="12.6" rx="2.4" fill="#6e7f91"/><rect x="1172.20" y="458.19" width="39.71" height="12.6" rx="3" fill="#87cefa"/><rect x="1212.34" y="479.45" width="39.71" height="12.6" rx="3" fill="#87cefa"/><rect x="1252.48" y="500.71" width="39.71" height="12.6" rx="3" fill="#87cefa"/><rect x="1292.62" y="521.97" width="39.71" height="12.6" rx="3" fill="#87cefa"/><rect x="1332.76" y="564.49" width="200.27" height="12.6" rx="2.4" fill="#6e7f91"/><rect x="1332.76" y="585.75" width="59.78" height="12.6" rx="3" fill="#87cefa"/><rect x="1392.97" y="607.01" width="79.85" height="12.6" rx="3" fill="#87cefa"/><rect x="1473.25" y="628.27" width="59.78" height="12.6" rx="3" fill="#87cefa"/><path d="M991.13 273.50 H993.13 Q995.63 273.50 995.63 276.00 V282.33 Q995.63 284.83 993.13 284.83 H989.06 Q986.56 284.83 986.56 287.33 V291.76" fill="none" stroke="#c2c2c2" stroke-width="1.1"/><path d="M985.36 290.16 L990.76 294.76 L985.36 299.36 Z" fill="#b4b4b4"/><path d="M1051.34 294.76 H1053.34 Q1055.84 294.76 1055.84 297.26 V303.59 Q1055.84 306.09 1053.34 306.09 H1049.27 Q1046.77 306.09 1046.77 308.59 V313.02" fill="none" stroke="#c2c2c2" stroke-width="1.1"/><path d="M1045.57 311.42 L1050.97 316.02 L1045.57 320.62 Z" fill="#b4b4b4"/><path d="M1111.55 316.02 H1113.55 Q1116.05 316.02 1116.05 318.52 V324.85 Q1116.05 327.35 1113.55 327.35 H1109.49 Q1106.99 327.35 1106.99 329.85 V334.28" fill="none" stroke="#c2c2c2" stroke-width="1.1"/><path d="M1105.79 332.68 L1111.19 337.28 L1105.79 341.88 Z" fill="#b4b4b4"/><path d="M1171.76 337.28 H1173.76 Q1176.26 337.28 1176.26 339.78 V346.11 Q1176.26 348.61 1173.76 348.61 H1169.70 Q1167.20 348.61 1167.20 351.11 V355.54" fill="none" stroke="#c2c2c2" stroke-width="1.1"/><path d="M1166.00 353.94 L1171.40 358.54 L1166.00 363.14 Z" fill="#b4b4b4"/><path d="M1332.33 358.54 H1334.33 Q1336.83 358.54 1336.83 361.04 V367.37 Q1336.83 369.87 1334.33 369.87 H1330.26 Q1327.76 369.87 1327.76 372.37 V376.80" fill="none" stroke="#c2c2c2" stroke-width="1.1"/><path d="M1326.56 375.20 L1331.96 379.80 L1326.56 384.40 Z" fill="#b4b4b4"/><path d="M1533.03 379.80 H1535.03 Q1537.53 379.80 1537.53 382.30 V388.63 Q1537.53 391.13 1535.03 391.13 H1530.96 Q1528.46 391.13 1528.46 393.63 V398.06" fill="none" stroke="#c2c2c2" stroke-width="1.1"/><path d="M1527.26 396.46 L1532.66 401.06 L1527.26 405.66 Z" fill="#b4b4b4"/><path d="M1211.90 464.84 H1213.90 Q1216.40 464.84 1216.40 467.34 V473.67 Q1216.40 476.17 1213.90 476.17 H1209.84 Q1207.34 476.17 1207.34 478.67 V483.10" fill="none" stroke="#c2c2c2" stroke-width="1.1"/><path d="M1206.14 481.50 L1211.54 486.10 L1206.14 490.70 Z" fill="#b4b4b4"/><path d="M1252.04 486.10 H1254.04 Q1256.54 486.10 1256.54 488.60 V494.93 Q1256.54 497.43 1254.04 497.43 H1249.98 Q1247.48 497.43 1247.48 499.93 V504.36" fill="none" stroke="#c2c2c2" stroke-width="1.1"/><path d="M1246.28 502.76 L1251.68 507.36 L1246.28 511.96 Z" fill="#b4b4b4"/><path d="M1292.19 507.36 H1294.19 Q1296.69 507.36 1296.69 509.86 V516.19 Q1296.69 518.69 1294.19 518.69 H1290.12 Q1287.62 518.69 1287.62 521.19 V525.62" fill="none" stroke="#c2c2c2" stroke-width="1.1"/><path d="M1286.42 524.02 L1291.82 528.62 L1286.42 533.22 Z" fill="#b4b4b4"/><path d="M1392.54 592.40 H1394.54 Q1397.04 592.40 1397.04 594.90 V601.23 Q1397.04 603.73 1394.54 603.73 H1390.47 Q1387.97 603.73 1387.97 606.23 V610.66" fill="none" stroke="#c2c2c2" stroke-width="1.1"/><path d="M1386.77 609.06 L1392.17 613.66 L1386.77 618.26 Z" fill="#b4b4b4"/><path d="M1472.82 613.66 H1474.82 Q1477.32 613.66 1477.32 616.16 V622.49 Q1477.32 624.99 1474.82 624.99 H1470.75 Q1468.25 624.99 1468.25 627.49 V631.92" fill="none" stroke="#c2c2c2" stroke-width="1.1"/><path d="M1467.05 630.32 L1472.45 634.92 L1467.05 639.52 Z" fill="#b4b4b4"/></svg>
</body></html>
